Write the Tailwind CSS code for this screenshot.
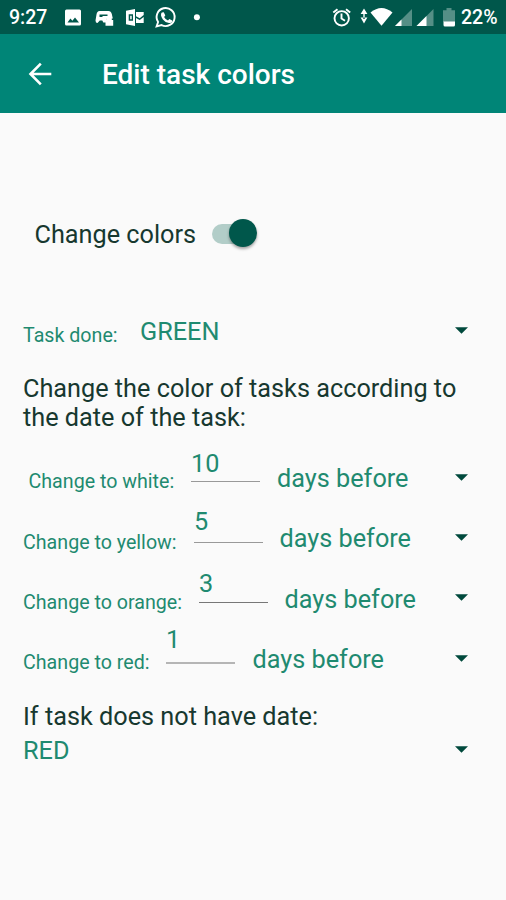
<!DOCTYPE html>
<html lang="en">
<head>
<meta charset="utf-8">
<title>Edit task colors</title>
<script src="https://cdn.jsdelivr.net/npm/@tailwindcss/browser@4"></script>
</head>
<body class="w-[506px] h-[900px] overflow-hidden bg-[#fafafa] font-['Roboto',sans-serif] text-[25.250px] text-[#1f8a70]">
<header>
  <div class="h-[34px] bg-[#00574b] flex items-center text-white text-[19.500px] font-medium leading-[36px]">
    <span class="ml-[9px] w-[55px] whitespace-nowrap pt-[2px]">9:27</span>
    <svg class="w-[146px] h-[34px] shrink-0" viewBox="64 0 146 34" fill="#fff">
      <path fill-rule="evenodd" d="M66.500 9.500h13q1.500 0 1.500 1.500v13q0 1.500-1.500 1.500h-13q-1.500 0-1.500-1.500V11q0-1.500 1.500-1.500zM67.500 22.500h11.500l-4-5-2.600 3.300-2-2.300z"/>
      <path fill-rule="evenodd" d="M99.500 11h9q2.500 0 3.300 3l1 4.500h-6v4h-3.500l-1-2h-2.500l-2.300 2.500q-2 0-2-2.500l1-6q.5-3.500 3-3.500zM99.500 14.500v2.500h3v-1h5v-1.500z"/>
      <path d="M106.500 20v-1.500a2.400 2.400 0 0 1 5.300 0V20h1.400v5.800h-7.700V20z"/>
      <path fill-rule="evenodd" d="M126 10.700l9-1.700v17l-9-1.700zM128.700 14.200v6.600h4.300v-6.600zM130.200 15.700h1.500v3.600h-1.500z"/>
      <path d="M136 12h7.700v3l-4 3.200-3.700-2zM136 18l3.700 2 4-3v6H136z"/>
      <path d="M158.100 22a9 9 0 1 1 3.500 3.100l-5 1.300z" fill="none" stroke="#fff" stroke-width="1.900"/>
      <path d="M161.800 12.600l2-.4 1.500 3.200-1.200 1.500q1.300 2.600 3.900 3.600l1.300-1.600 3 1.500q0 2.700-3.400 2.700-3.500-.5-6-3.700-3.200-4.300-1.100-6.800z"/>
      <circle cx="196.900" cy="17.300" r="3"/>
    </svg>
    <svg class="w-[134px] h-[34px] ml-[116px] shrink-0" viewBox="326 0 134 34" fill="#fff">
      <g fill="none" stroke="#fff" stroke-width="1.900"><circle cx="341.700" cy="18.300" r="7.200"/><path d="M341.500 13.500v5l3.500 2.300M333.300 12.500l4.200-3.300M350.200 12.500L346 9.200"/></g>
      <path d="M364 8.500l3.400 5.500h-6.800zM364 23.500l3.400-6h-6.800zM363.300 13h1.400v6h-1.400z"/>
      <path d="M370.500 12.500q11-9 22 0l-11 13.200z"/>
      <path d="M412 9v17h-17z" fill="#558f86"/><path d="M401.500 19.500V26H395z"/>
      <path d="M433.500 9v17h-17z" fill="#558f86"/><path d="M426.500 16v10h-10z"/>
      <path d="M446.500 8h5v2.200h3.500V22h-12V10.200h3.500z" fill="#558f86"/><path d="M443.500 21.500H455V25q0 1.500-1.500 1.500H445q-1.500 0-1.500-1.500z"/>
    </svg>
    <span class="ml-px pt-[2px]">22%</span>
  </div>
  <div class="h-[78.500px] bg-[#008577] flex items-center text-white">
    <svg class="ml-[28px] mt-[1px] w-[24px] h-[24px]" viewBox="0 0 24 24" fill="none" stroke="#fff" stroke-width="2.600"><path d="M23.300 12H2.500M12.800 1.700L2.500 12l10.300 10.300"/></svg>
    <h1 class="ml-[50px] text-[28px] font-medium leading-[78px] pt-[3px]">Edit task colors</h1>
  </div>
</header>
<main class="pt-[101.500px]">
  <div class="h-[40px] flex items-center pl-[34.500px] text-[#17382f]">
    <span class="w-[177px] leading-[40px] pt-[2px]">Change colors</span>
    <div class="w-[46px] h-[28px] flex items-center">
      <span class="w-[34px] h-[20px] rounded-full bg-[#b2cdc8]"></span>
      <span class="w-[28px] h-[28px] rounded-full bg-[#00574b] -ml-[17px] -mt-[2px] shrink-0 shadow-[0_2px_3px_rgba(0,0,0,0.350)]"></span>
    </div>
  </div>
  <div class="mt-[57px] h-[40px] flex pl-[23px] pr-[38px] leading-[40px]">
    <span class="w-[117px] text-[19.650px] mt-[4.500px]">Task done:</span><span class="pt-px">GREEN</span>
    <svg class="ml-auto mt-[15.500px] w-[13px] h-[7px]" viewBox="0 0 14 7"><path d="M0 0h14L7 7z" fill="#00493c"/></svg>
  </div>
  <p class="mt-[22.500px] -mb-[0.500px] ml-[23px] w-[450px] leading-[29.500px] text-[#17382f]">Change the color of tasks according to<br>the date of the task:</p>
  <div class="mt-[16px] leading-[60.500px]">
    <div class="h-[60.500px] flex pl-[28.500px] pr-[38px]">
      <span class="w-[162.500px] text-[19.650px] mt-[4px]">Change to white:</span>
      <span class="w-[69px] h-[34px] border-b-[1.500px] border-[#999] leading-[31px]">10</span>
      <span class="ml-[17px] pt-px">days before</span>
      <svg class="ml-auto mt-[25.500px] w-[13px] h-[7px]" viewBox="0 0 14 7"><path d="M0 0h14L7 7z" fill="#00493c"/></svg>
    </div>
    <div class="h-[60.500px] flex pl-[23px] pr-[38px]">
      <span class="w-[171px] text-[19.650px] mt-[4px]">Change to yellow:</span>
      <span class="w-[69px] h-[34px] border-b-[1.500px] border-[#999] leading-[26px]">5</span>
      <span class="ml-[16.500px]">days before</span>
      <svg class="ml-auto mt-[25.500px] w-[13px] h-[7px]" viewBox="0 0 14 7"><path d="M0 0h14L7 7z" fill="#00493c"/></svg>
    </div>
    <div class="h-[60.500px] flex pl-[23px] pr-[38px]">
      <span class="w-[176px] text-[19.650px] mt-[4px]">Change to orange:</span>
      <span class="w-[69px] h-[34px] border-b-[1.500px] border-[#777] leading-[29px]">3</span>
      <span class="ml-[16.500px] pt-px">days before</span>
      <svg class="ml-auto mt-[25px] w-[13px] h-[7px]" viewBox="0 0 14 7"><path d="M0 0h14L7 7z" fill="#00493c"/></svg>
    </div>
    <div class="h-[60.500px] flex pl-[23px] pr-[38px]">
      <span class="w-[143px] text-[19.650px] mt-[3.500px]">Change to red:</span>
      <span class="w-[69px] h-[34px] border-b-2 border-[#b5b5b5] leading-[20px]">1</span>
      <span class="ml-[17.500px]">days before</span>
      <svg class="ml-auto mt-[25px] w-[13px] h-[7px]" viewBox="0 0 14 7"><path d="M0 0h14L7 7z" fill="#00493c"/></svg>
    </div>
  </div>
  <p class="mt-[10px] ml-[23px] leading-[34px] text-[#17382f]">If task does not have date:</p>
  <div class="flex items-center pl-[23px] pr-[38px] leading-[34px]">
    <span>RED</span>
    <svg class="ml-auto -mt-[4px] w-[13px] h-[7px]" viewBox="0 0 14 7"><path d="M0 0h14L7 7z" fill="#00493c"/></svg>
  </div>
</main>
</body>
</html>
